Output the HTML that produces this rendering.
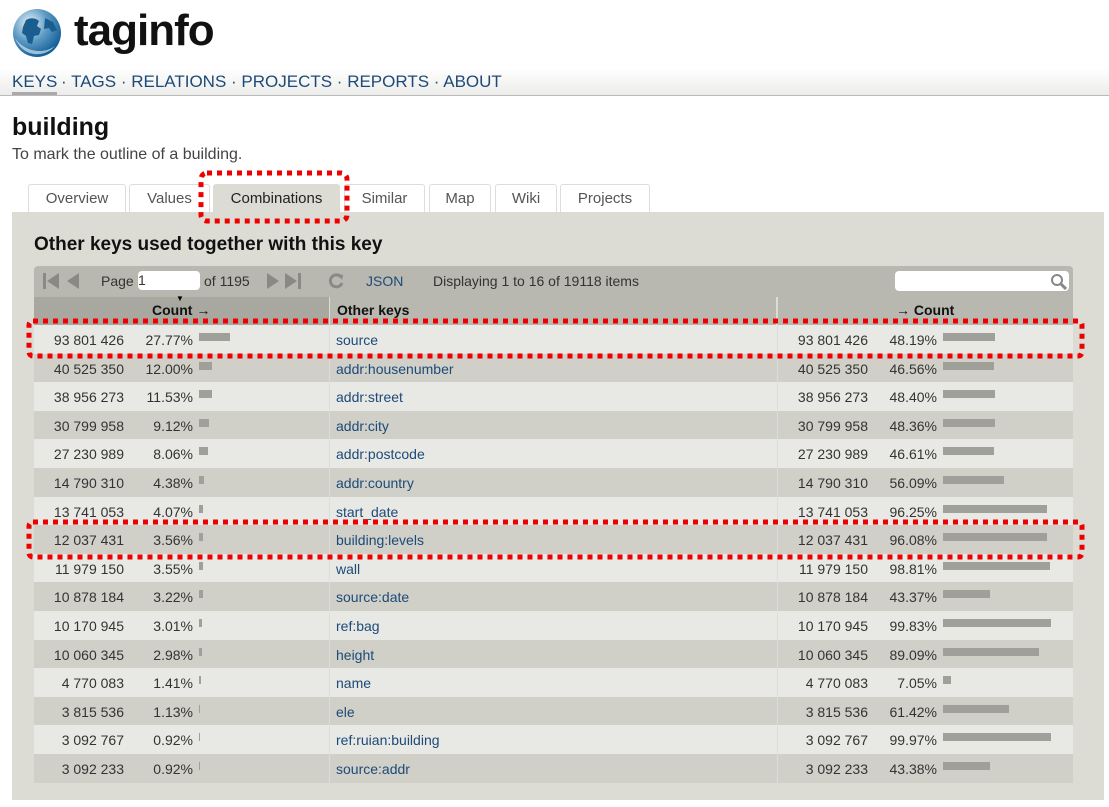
<!DOCTYPE html>
<html><head><meta charset="utf-8"><style>
body{margin:0;width:1109px;height:807px;background:#fff;font-family:"Liberation Sans",sans-serif;position:relative;overflow:hidden}
.a{position:absolute}
.nav{left:0;top:68px;width:1109px;height:27px;background:linear-gradient(#fff,#ececea);border-bottom:1px solid #bbb}
.nav span{position:absolute;top:4px;font-size:17px;color:#1d4a78;white-space:nowrap}
.tab{position:absolute;top:184px;height:28px;border:1px solid #ddd;border-bottom:none;border-radius:3px 3px 0 0;background:#fff;color:#555;font-size:15px;text-align:center;line-height:28px;box-sizing:border-box}
.row{position:absolute;left:34px;width:1039px;height:28.6px;font-size:14px;color:#333}
.row div{position:absolute;top:7px;white-space:nowrap}
.row div.bar{top:8px;height:8px;background:#a0a09a}
</style></head><body>
<svg class="a" style="left:12px;top:8px" width="50" height="50" viewBox="0 0 50 50"><defs><radialGradient id="g" cx="35%" cy="30%" r="75%"><stop offset="0" stop-color="#e8f2f8"/><stop offset=".5" stop-color="#5c9ac4"/><stop offset="1" stop-color="#0d5a94"/></radialGradient></defs><circle cx="25" cy="25" r="24" fill="url(#g)"/><path d="M14 12c5-3 10-2 13 1l-2 5 4 3-2 6-5 1-2 8-4-1-2-7-4-3 1-6z" fill="#1a5e8f"/><path d="M33 10l8 4 4 8-5 2-3-4-5 1z" fill="#1a5e8f"/><path d="M3 30c8 12 26 18 40 8-10 12-32 12-40-8z" fill="#cfe3ef" opacity=".7"/></svg>
<div class="a" style="left:74px;top:6px;font-size:44px;font-weight:bold;color:#111;letter-spacing:-1px">taginfo</div>
<div class="a nav">
<span style="left:12px;border-bottom:3px solid #aaa;line-height:20px">KEYS</span><span style="left:61px">· TAGS · RELATIONS · PROJECTS · REPORTS · ABOUT</span></div>
<div class="a" style="left:12px;top:113px;font-size:25px;font-weight:bold;color:#111">building</div>
<div class="a" style="left:12px;top:146px;font-size:16px;color:#444">To mark the outline of a building.</div>
<div class="tab" style="left:28px;width:98px">Overview</div>
<div class="tab" style="left:129px;width:81px">Values</div>
<div class="tab" style="left:213px;width:127px;background:#dcdcd4;color:#222;border-color:#dcdcd4">Combinations</div>
<div class="tab" style="left:344px;width:81px">Similar</div>
<div class="tab" style="left:429px;width:62px">Map</div>
<div class="tab" style="left:495px;width:62px">Wiki</div>
<div class="tab" style="left:560px;width:90px">Projects</div>
<div class="a" style="left:12px;top:212px;width:1092px;height:588px;background:#dcdcd4"></div>
<div class="a" style="left:34px;top:234px;font-size:19px;font-weight:bold;color:#111">Other keys used together with this key</div>
<div class="a" style="left:34px;top:266px;width:1039px;height:31px;background:#b8b8b0;border-radius:4px 4px 0 0"></div>
<svg class="a" style="left:40px;top:271px" width="300" height="20" fill="#8a8a85">
<rect x="3" y="2" width="3" height="16"/><path d="M19 2v16l-12-8z"/><path d="M39 2v16l-12-8z"/>
<path d="M227 2v16l12-8z"/><path d="M245 2v16l12-8z"/><rect x="258" y="2" width="3" height="16"/>
<path d="M300 4a7 7 0 1 0 5 3" fill="none"/>
</svg>
<div class="a" style="left:101px;top:273px;font-size:14px;color:#333">Page</div>
<div class="a" style="left:138px;top:271px;width:62px;height:19px;background:#fff;border-radius:4px;font-size:14px;line-height:19px;color:#333">1</div>
<div class="a" style="left:204px;top:273px;font-size:14px;color:#333">of 1195</div>
<svg class="a" style="left:327px;top:272px" width="18" height="18"><path d="M14 5a6 6 0 1 0 1 6" fill="none" stroke="#8a8a85" stroke-width="3"/><path d="M11 2l5 1-1 5z" fill="#8a8a85"/></svg>
<div class="a" style="left:366px;top:273px;font-size:14px;color:#1d4a78">JSON</div>
<div class="a" style="left:433px;top:273px;font-size:14px;color:#333">Displaying 1 to 16 of 19118 items</div>
<div class="a" style="left:895px;top:271px;width:174px;height:20px;background:#fff;border-radius:4px"></div>
<svg class="a" style="left:1050px;top:273px" width="17" height="17"><circle cx="7" cy="7" r="5" fill="none" stroke="#888" stroke-width="2"/><path d="M11 11l5 5" stroke="#888" stroke-width="3"/></svg>
<div class="a" style="left:34px;top:297px;width:295px;height:28px;background:#a8a8a0"></div>
<div class="a" style="left:330px;top:297px;width:446px;height:28px;background:#b8b8b0"></div>
<div class="a" style="left:778px;top:297px;width:295px;height:28px;background:#b8b8b0"></div>
<div class="a" style="left:152px;top:302px;font-size:14px;font-weight:bold;color:#111">Count →</div>
<div class="a" style="left:176px;top:294px;font-size:8px">▼</div>
<div class="a" style="left:337px;top:302px;font-size:14px;font-weight:bold;color:#111">Other keys</div>
<div class="a" style="left:896px;top:302px;font-size:14px;font-weight:bold;color:#111">→ Count</div>
<div id="rows"></div>
<script>
var d=[["93 801 426","27.77%",31,"source","48.19%",52],["40 525 350","12.00%",13,"addr:housenumber","46.56%",51],["38 956 273","11.53%",13,"addr:street","48.40%",52],["30 799 958","9.12%",10,"addr:city","48.36%",52],["27 230 989","8.06%",9,"addr:postcode","46.61%",51],["14 790 310","4.38%",5,"addr:country","56.09%",61],["13 741 053","4.07%",4,"start_date","96.25%",104],["12 037 431","3.56%",4,"building:levels","96.08%",104],["11 979 150","3.55%",4,"wall","98.81%",107],["10 878 184","3.22%",4,"source:date","43.37%",47],["10 170 945","3.01%",3,"ref:bag","99.83%",108],["10 060 345","2.98%",3,"height","89.09%",96],["4 770 083","1.41%",2,"name","7.05%",8],["3 815 536","1.13%",1,"ele","61.42%",66],["3 092 767","0.92%",1,"ref:ruian:building","99.97%",108],["3 092 233","0.92%",1,"source:addr","43.38%",47]];
var h="";d.forEach(function(r,i){var t=325+i*28.6;var bg=i%2?"#d0d0c8":"#e8e8e4";
h+='<div class="row" style="top:'+t+'px;background:'+bg+'"><div style="right:949px">'+r[0]+'</div><div style="right:880px">'+r[1]+'</div><div class="bar" style="left:165px;width:'+r[2]+'px"></div><div style="left:302px;color:#1d4a78">'+r[3]+'</div><div style="right:205px">'+r[0]+'</div><div style="right:136px">'+r[4]+'</div><div class="bar" style="left:909px;width:'+r[5]+'px"></div><div style="left:295px;top:0;width:1px;height:28.6px;background:#ddd"></div><div style="left:743px;top:0;width:1px;height:28.6px;background:#ddd"></div></div>';});
document.getElementById("rows").innerHTML=h;
</script>
<svg class="a" style="left:0;top:0" width="1109" height="807" fill="none" stroke="#e00" stroke-width="5" stroke-dasharray="5 5">
<rect x="201" y="173" width="146" height="48" rx="6"/>
<rect x="29" y="321" width="1053" height="35" rx="4"/>
<rect x="29" y="522" width="1053" height="35" rx="4"/>
</svg>
</body></html>
